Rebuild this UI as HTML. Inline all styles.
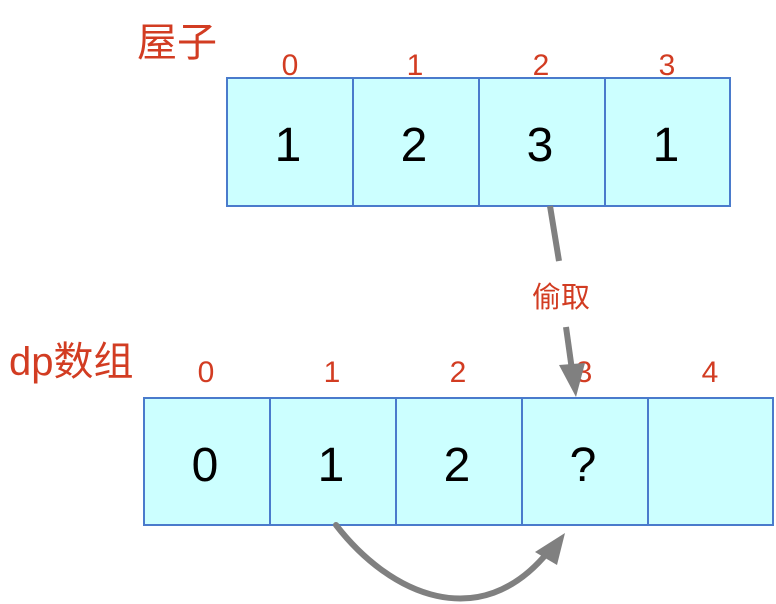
<!DOCTYPE html>
<html><head><meta charset="utf-8">
<style>
html,body{margin:0;padding:0;background:#fff;width:776px;height:604px;overflow:hidden}
svg{display:block}
.r{fill:#d23c22;font-family:"Liberation Sans","Noto Sans CJK SC",sans-serif}
.n{fill:#000;font-family:"Liberation Sans",sans-serif;font-size:48px}
.c{fill:#ccffff;stroke:#4a7bcc;stroke-width:2}
</style></head><body>
<svg width="776" height="604" viewBox="0 0 776 604">
<text class="r" x="137" y="56" font-size="40">屋子</text>
<text class="r" x="9" y="375" font-size="40">dp数组</text>
<g text-anchor="middle">
<text class="r" x="290" y="75" font-size="30">0</text>
<text class="r" x="415" y="75" font-size="30">1</text>
<text class="r" x="541" y="75" font-size="30">2</text>
<text class="r" x="667" y="75" font-size="30">3</text>
<text class="r" x="206" y="382" font-size="30">0</text>
<text class="r" x="332" y="382" font-size="30">1</text>
<text class="r" x="458" y="382" font-size="30">2</text>
<text class="r" x="584" y="382" font-size="30">3</text>
<text class="r" x="710" y="382" font-size="30">4</text>
</g>
<rect class="c" x="227" y="78" width="126" height="128"/>
<rect class="c" x="353" y="78" width="126" height="128"/>
<rect class="c" x="479" y="78" width="126" height="128"/>
<rect class="c" x="605" y="78" width="125" height="128"/>
<rect class="c" x="144" y="398" width="126" height="127"/>
<rect class="c" x="270" y="398" width="126" height="127"/>
<rect class="c" x="396" y="398" width="126" height="127"/>
<rect class="c" x="522" y="398" width="126" height="127"/>
<rect class="c" x="648" y="398" width="125" height="127"/>
<g text-anchor="middle">
<text class="n" x="288" y="161">1</text>
<text class="n" x="414" y="161">2</text>
<text class="n" x="540" y="161">3</text>
<text class="n" x="666" y="161">1</text>
<text class="n" x="205" y="481">0</text>
<text class="n" x="331" y="481">1</text>
<text class="n" x="457" y="481">2</text>
<text class="n" x="583" y="481">?</text>
</g>
<g stroke="#808080" stroke-width="6" fill="none" stroke-linecap="butt">
<line x1="550" y1="206" x2="559" y2="261"/>
<line x1="566" y1="327" x2="572" y2="370"/>
<path d="M336 525 C 390 595, 480 635, 548 552" stroke-linecap="round"/>
</g>
<polygon points="559,365 585,363 576,397" fill="#808080"/>
<polygon points="565,533 535,552 557,565" fill="#808080"/>
<text class="r" x="561" y="307" font-size="29" text-anchor="middle">偷取</text>
</svg>
</body></html>
